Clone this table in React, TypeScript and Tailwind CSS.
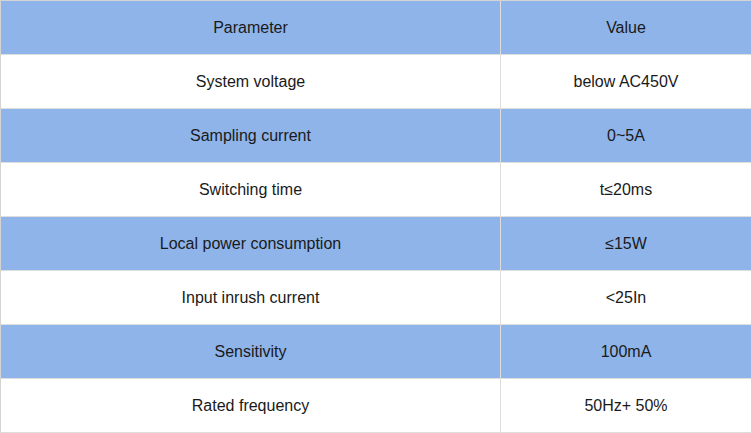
import React from "react";

const rows: [string, string][] = [
  ["Parameter", "Value"],
  ["System voltage", "below AC450V"],
  ["Sampling current", "0~5A"],
  ["Switching time", "t≤20ms"],
  ["Local power consumption", "≤15W"],
  ["Input inrush current", "<25In"],
  ["Sensitivity", "100mA"],
  ["Rated frequency", "50Hz+ 50%"],
];

export default function App() {
  return (
    <div
      className="w-[751px] h-[433px] bg-white text-[#1a1a1a] text-[16px]"
      style={{ fontFamily: '"Liberation Sans", Arial, sans-serif' }}
    >
      <div className="grid grid-cols-[500px_251px] border-t border-l border-[#d4d4d4]">
        {rows.map(([a, b], i) => {
          const bg = i % 2 === 0 ? "bg-[#8eb4ea]" : "bg-white";
          return (
            <React.Fragment key={i}>
              <div className={`${bg} h-[54px] flex items-center justify-center border-r border-b border-[#dedede]`}>
                {a}
              </div>
              <div className={`${bg} h-[54px] flex items-center justify-center border-r border-b border-[#dedede]`}>
                {b}
              </div>
            </React.Fragment>
          );
        })}
      </div>
    </div>
  );
}
